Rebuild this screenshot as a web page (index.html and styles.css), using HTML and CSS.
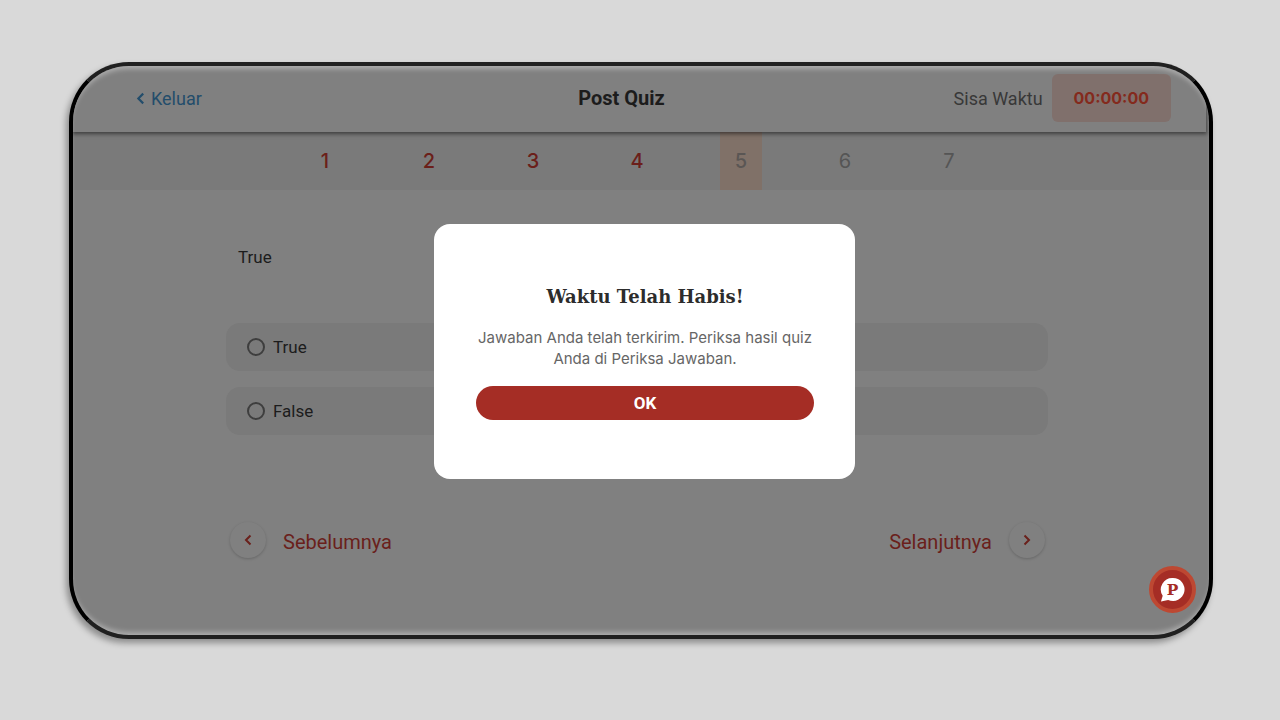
FILE: index.html
```html
<!DOCTYPE html>
<html lang="id">
<head>
<meta charset="utf-8">
<meta name="viewport" content="width=device-width, initial-scale=1">
<title>Post Quiz</title>
<link rel="stylesheet" href="styles.css">
</head>
<body>
<div class="device">
  <header class="topbar">
    <a class="exit" href="#">
      <svg class="exit-icon" viewBox="0 0 8 12" aria-hidden="true"><path d="M6.500 1.500 2 6l4.500 4.500"/></svg>
      Keluar
    </a>
    <h1 class="title">Post Quiz</h1>
    <div class="timer">
      <span>Sisa Waktu</span>
      <span class="clock">00:00:00</span>
    </div>
  </header>

  <nav class="steps" aria-label="Soal">
    <a class="step" href="#">1</a>
    <a class="step" href="#">2</a>
    <a class="step" href="#">3</a>
    <a class="step" href="#">4</a>
    <a class="step current" href="#">5</a>
    <a class="step pending" href="#">6</a>
    <a class="step pending" href="#">7</a>
  </nav>

  <main class="quiz">
    <p class="question">True</p>
    <div class="options">
      <label class="option" for="answer-true"><input class="radio" type="radio" name="answer" id="answer-true">True</label>
      <label class="option" for="answer-false"><input class="radio" type="radio" name="answer" id="answer-false">False</label>
    </div>
    <div class="pager">
      <button class="page-button" type="button">
        <span class="circle"><svg class="arrow" viewBox="0 0 8 12" aria-hidden="true"><path d="M6.500 1.500 2 6l4.500 4.500"/></svg></span>
        <span class="page-label">Sebelumnya</span>
      </button>
      <button class="page-button" type="button">
        <span class="page-label">Selanjutnya</span>
        <span class="circle"><svg class="arrow" viewBox="0 0 8 12" aria-hidden="true"><path d="M1.500 1.500 6 6l-4.500 4.500"/></svg></span>
      </button>
    </div>
  </main>

  <div class="overlay">
    <section class="modal" role="dialog" aria-labelledby="modal-title">
      <h2 class="modal-title" id="modal-title">Waktu Telah Habis!</h2>
      <p class="modal-text">Jawaban Anda telah terkirim. Periksa hasil quiz Anda di Periksa Jawaban.</p>
      <button class="ok" type="button">OK</button>
    </section>
  </div>

  <button class="chat" type="button" aria-label="Chat">
    <svg class="chat-icon" viewBox="0 0 26 26" aria-hidden="true">
      <path d="M13.500 1a12 12 0 1 1-5 22.900L1 25.500l1.800-6A12 12 0 0 1 13.500 1z" fill="#fff"/>
      <text class="chat-letter" x="13" y="19" text-anchor="middle">P</text>
    </svg>
  </button>
</div>
</body>
</html>
```
FILE: styles.css
```css
* {
  box-sizing: border-box;
}

body {
  margin: 0;
  min-height: 100vh;
  padding: 62px 67px 81px 69px;
  display: flex;
  background: #d9d9d9;
  font-family: Roboto, "Liberation Sans", sans-serif;
  color: #1c1c1c;
}

h1, h2, p {
  margin: 0;
}

a {
  text-decoration: none;
}

button {
  border: 0;
  padding: 0;
  background: none;
  font: inherit;
  color: inherit;
}

.device {
  position: relative;
  flex: 1;
  display: flex;
  flex-direction: column;
  overflow: hidden;
  border: 4px solid #000;
  border-top-color: #202020;
  border-bottom-color: #202020;
  border-radius: 60px;
  background: #808080;
  box-shadow: -3px 4px 6px rgba(0, 0, 0, 0.35);
}

/* glossy edge along the top and bottom of the frame */
.device::after {
  content: "";
  position: absolute;
  inset: 0;
  z-index: 2;
  border-radius: 56px;
  box-shadow: inset 0 6px 5px -3px rgba(255, 255, 255, 0.35), inset 0 -6px 5px -3px rgba(255, 255, 255, 0.35);
  pointer-events: none;
}

.topbar {
  position: relative;
  z-index: 1;
  display: grid;
  grid-template-columns: 1fr auto 1fr;
  align-items: center;
  margin-right: 3px;
  padding: 8px 35px 10px 63px;
  background: #808080;
  box-shadow: 0 1px 4px 1px rgba(0, 0, 0, 0.5);
}

.exit {
  display: flex;
  align-items: center;
  gap: 6px;
  font-size: 18px;
  color: #234d6b;
}

.exit-icon {
  width: 9px;
  height: 13px;
  fill: none;
  stroke: currentColor;
  stroke-width: 2;
}

.title {
  padding-right: 64px;
  font-size: 20px;
  line-height: 24px;
  font-weight: 700;
}

.timer {
  display: flex;
  align-items: center;
  justify-content: flex-end;
  gap: 9px;
  font-size: 18px;
  color: #383838;
}

.clock {
  padding: 12px 22px;
  border-radius: 6px;
  background: #80706c;
  font-family: Inter, sans-serif;
  font-size: 16px;
  line-height: 24px;
  font-weight: 700;
  color: #842a1d;
}

.steps {
  display: flex;
  justify-content: center;
  gap: 62px;
  padding-right: 8px;
  background: #7a7a7a;
}

.step {
  width: 42px;
  font-family: Inter, sans-serif;
  font-size: 20px;
  line-height: 58px;
  font-weight: 500;
  text-align: center;
  color: #6b1f1a;
}

.current {
  background: #807168;
  color: #5a5654;
}

.pending {
  font-weight: 400;
  color: #555;
}

.quiz {
  width: 100%;
  max-width: 830px;
  margin: 0 auto;
  padding: 55px 8px 0 0;
}

.question {
  padding-left: 12px;
  font-size: 17px;
  line-height: 24px;
}

.options {
  display: grid;
  gap: 16px;
  margin-top: 54px;
}

.option {
  display: flex;
  align-items: center;
  gap: 8px;
  min-height: 48px;
  padding-left: 21px;
  border-radius: 14px;
  background: #7a7a7a;
  font-size: 17px;
}

.radio {
  appearance: none;
  width: 18px;
  height: 18px;
  margin: 0;
  border: 2px solid #3e3e3e;
  border-radius: 50%;
}

.pager {
  display: flex;
  justify-content: space-between;
  margin-top: 87px;
  padding: 0 3px 0 4px;
}

.page-button {
  display: flex;
  align-items: center;
  gap: 17px;
  font-size: 20px;
  color: #6a201b;
}

.page-label {
  padding-top: 4px;
}

.circle {
  display: grid;
  place-items: center;
  width: 36px;
  height: 36px;
  border-radius: 50%;
  background: #808080;
  box-shadow: 0 1px 3px rgba(0, 0, 0, 0.2);
}

.arrow {
  width: 8px;
  height: 12px;
  fill: none;
  stroke: currentColor;
  stroke-width: 2;
}

.overlay {
  position: absolute;
  inset: 0;
  z-index: 2;
  display: grid;
  place-items: center;
  padding: 2px 0 0 7px;
}

.modal {
  width: 421px;
  padding: 61px 41px 59px 42px;
  border-radius: 16px;
  background: #fff;
  text-align: center;
}

.modal-title {
  font-family: "DejaVu Serif", serif;
  font-size: 18px;
  line-height: 24px;
  color: #2c2c2c;
}

.modal-text {
  margin-top: 18px;
  font-family: Inter, sans-serif;
  font-size: 15px;
  line-height: 21px;
  color: #666;
}

.ok {
  width: 100%;
  margin-top: 17px;
  border-radius: 17px;
  background: #a52d25;
  font-size: 17px;
  line-height: 34px;
  font-weight: 700;
  color: #fff;
}

.chat {
  position: absolute;
  right: 13px;
  bottom: 22px;
  z-index: 3;
  display: grid;
  place-items: center;
  width: 47px;
  height: 47px;
  border: 4px solid #bd4832;
  border-radius: 50%;
  background: #a52d25;
}

.chat-icon {
  width: 25px;
  height: 25px;
}

.chat-letter {
  font-family: "DejaVu Serif", serif;
  font-size: 16px;
  font-weight: 700;
  fill: #a52d25;
}
```
